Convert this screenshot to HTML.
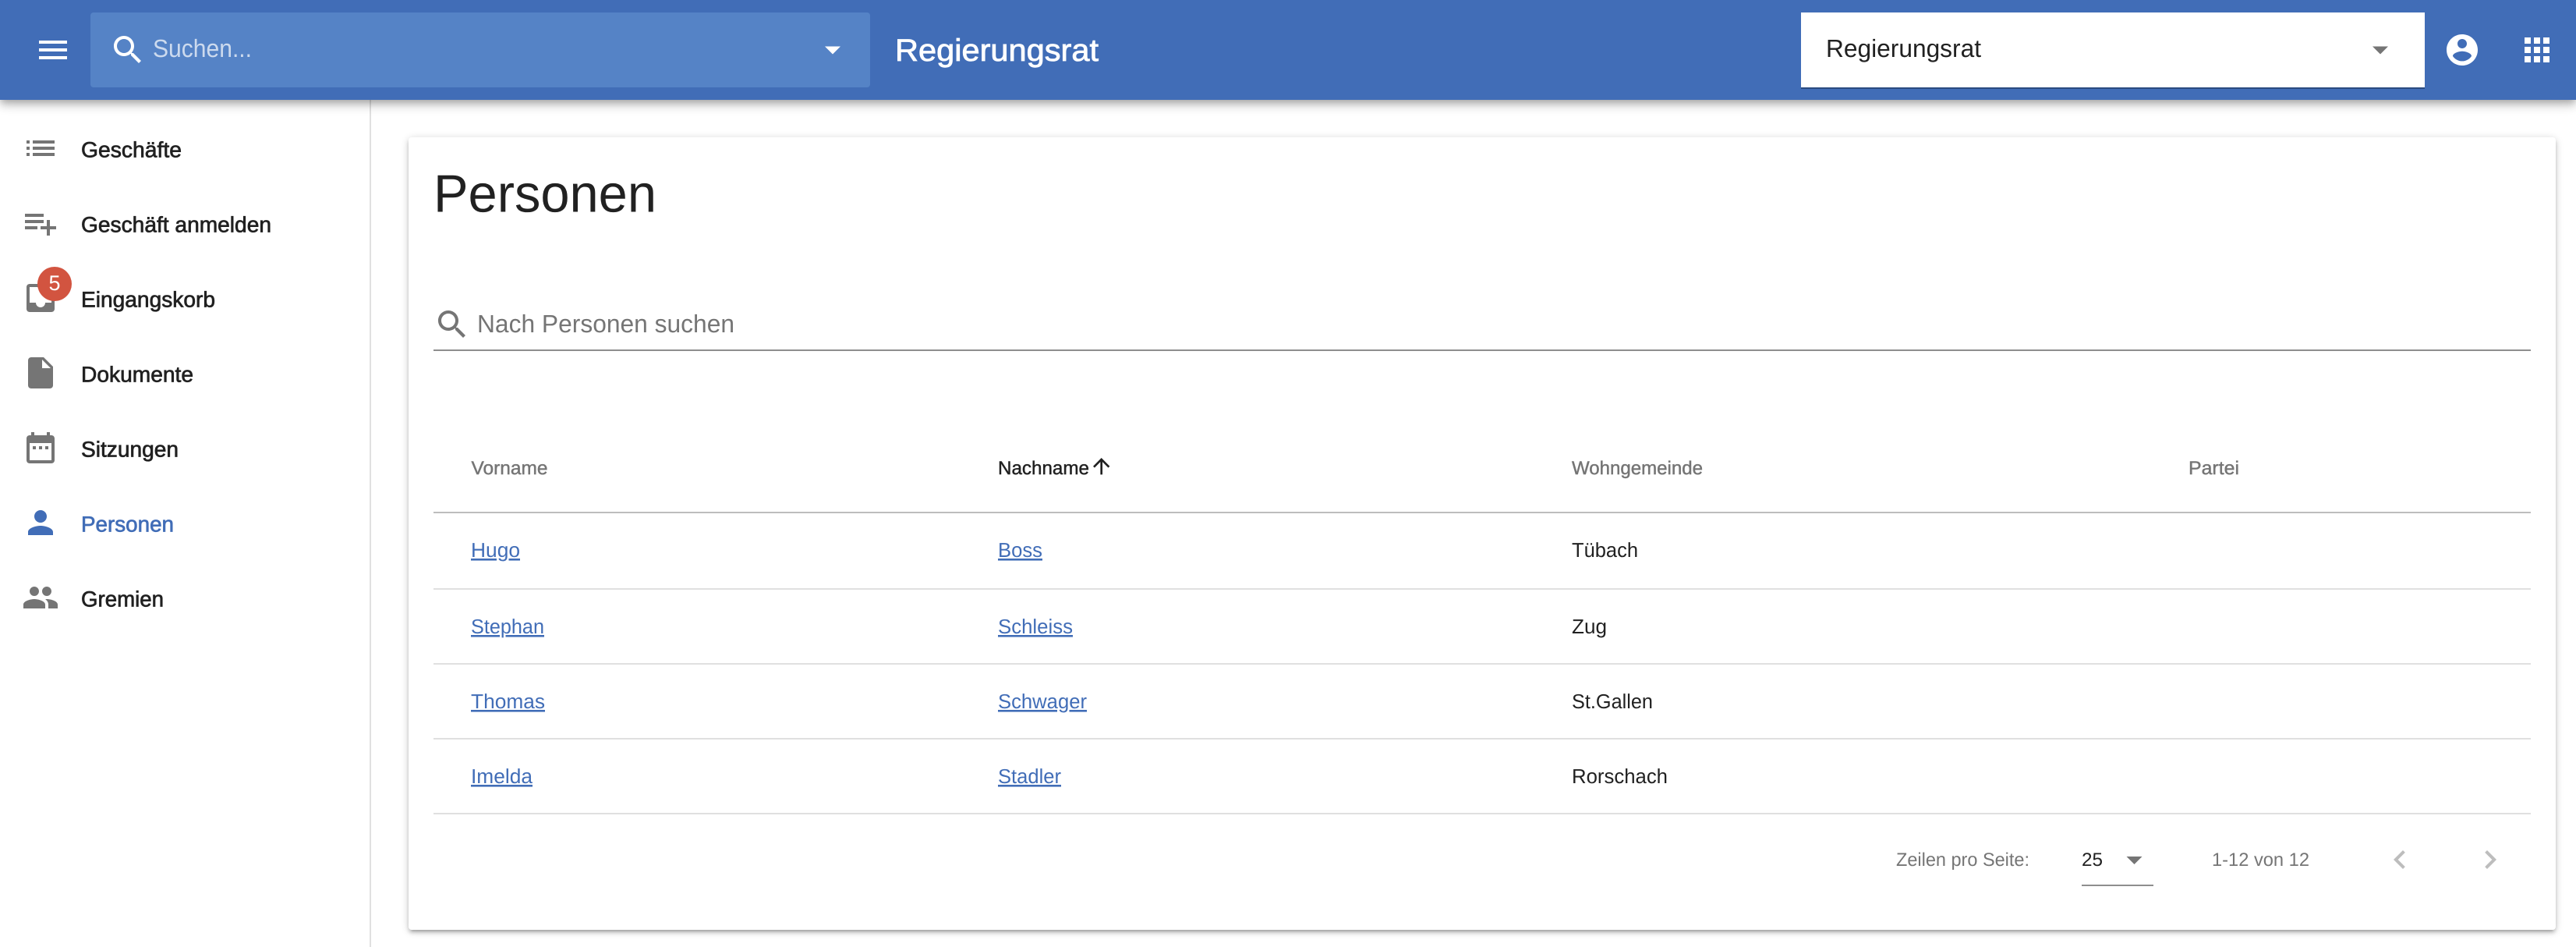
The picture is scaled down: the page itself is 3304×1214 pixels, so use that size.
<!DOCTYPE html>
<html lang="de">
<head>
<meta charset="utf-8">
<title>Personen</title>
<style>
html,body{margin:0;padding:0;width:3304px;height:1214px;overflow:hidden;background:#fff}
body{position:relative;font-family:"Liberation Sans",sans-serif}
.abs{position:absolute}
#side{left:0;top:128px;width:474px;height:1086px;border-right:2px solid #e0e0e0;background:#fff}
#card{left:524px;top:176px;width:2754px;height:1016px;background:#fff;border-radius:4px;box-shadow:0 4px 4px 0 rgba(0,0,0,.14),0 6px 2px -4px rgba(0,0,0,.12),0 2px 10px 0 rgba(0,0,0,.2)}
#head{left:0;top:0;width:3304px;height:128px;background:#416db7;box-shadow:0 4px 8px -2px rgba(0,0,0,.2),0 8px 10px 0 rgba(0,0,0,.14),0 2px 20px 0 rgba(0,0,0,.12)}
#sbox{left:116px;top:16px;width:1000px;height:96px;background:#5583c6;border-radius:4px}
#sel{left:2310px;top:16px;width:800px;height:96px;background:#fff;border-bottom:2px solid #2b4b80}
svg{position:absolute;left:0;top:0;font-family:"Liberation Sans",sans-serif;text-rendering:geometricPrecision}
.n{font-size:28px;fill:#212121;stroke:#212121;stroke-width:.7px}
.th{font-size:24px;fill:#757575;stroke:#757575;stroke-width:.45px}
.td{font-size:26px;fill:#212121}
.a{font-size:26px;fill:#416db7;text-decoration:underline}
.p{font-size:24px;fill:#757575}
.g{fill:#757575}
</style>
</head>
<body>
<div id="side" class="abs"></div>
<div id="card" class="abs"></div>
<div id="head" class="abs"></div>
<div id="sbox" class="abs"></div>
<div id="sel" class="abs"></div>
<svg width="3304" height="1214" viewBox="0 0 3304 1214" xmlns="http://www.w3.org/2000/svg">
  <!-- Header icons -->
  <path fill="#fff" transform="translate(44 40) scale(2)" d="M3 18h18v-2H3v2zm0-5h18v-2H3v2zm0-7v2h18V6H3z"/>
  <path fill="#fff" transform="translate(140 40) scale(2)" d="M15.5 14h-.79l-.28-.27C15.41 12.59 16 11.11 16 9.5 16 5.91 13.09 3 9.5 3S3 5.91 3 9.5 5.91 16 9.5 16c1.61 0 3.09-.59 4.23-1.57l.27.28v.79l5 4.99L20.49 19l-4.99-5zm-6 0C7.01 14 5 11.99 5 9.5S7.01 5 9.5 5 14 7.01 14 9.5 11.99 14 9.5 14z"/>
  <text x="196" y="73" font-size="32" fill="#fff" fill-opacity=".7" textLength="127" lengthAdjust="spacingAndGlyphs">Suchen...</text>
  <path fill="#fff" transform="translate(1044 39.5) scale(2)" d="M7 10l5 5 5-5z"/>
  <text x="1148" y="78" font-size="40" fill="#fff" stroke="#fff" stroke-width=".8" textLength="261" lengthAdjust="spacingAndGlyphs">Regierungsrat</text>
  <text x="2342" y="73" font-size="32" fill="#212121" textLength="199" lengthAdjust="spacingAndGlyphs">Regierungsrat</text>
  <path fill="#757575" transform="translate(3029 39.5) scale(2)" d="M7 10l5 5 5-5z"/>
  <path fill="#fff" transform="translate(3134 40) scale(2)" d="M12 2C6.48 2 2 6.48 2 12s4.48 10 10 10 10-4.48 10-10S17.52 2 12 2zm0 3c1.66 0 3 1.34 3 3s-1.34 3-3 3-3-1.34-3-3 1.34-3 3-3zm0 14.2c-2.5 0-4.71-1.28-6-3.22.03-1.99 4-3.08 6-3.08 1.99 0 5.97 1.09 6 3.08-1.29 1.94-3.5 3.22-6 3.22z"/>
  <path fill="#fff" transform="translate(3230 40) scale(2)" d="M4 8h4V4H4v4zm6 12h4v-4h-4v4zm-6 0h4v-4H4v4zm0-6h4v-4H4v4zm6 0h4v-4h-4v4zm6-10v4h4V4h-4zm-6 4h4V4h-4v4zm6 6h4v-4h-4v4zm0 6h4v-4h-4v4z"/>

  <!-- Sidebar -->
  <path class="g" transform="translate(28 166) scale(2)" d="M3 13h2v-2H3v2zm0 4h2v-2H3v2zm0-8h2V7H3v2zm4 4h14v-2H7v2zm0 4h14v-2H7v2zM7 7v2h14V7H7z"/>
  <text class="n" x="104" y="201.500" textLength="129" lengthAdjust="spacingAndGlyphs">Geschäfte</text>
  <path class="g" transform="translate(28 262) scale(2)" d="M14 10H2v2h12v-2zm0-4H2v2h12V6zm4 8v-4h-2v4h-4v2h4v4h2v-4h4v-2h-4zM2 16h8v-2H2v2z"/>
  <text class="n" x="104" y="297.500" textLength="244" lengthAdjust="spacingAndGlyphs">Geschäft anmelden</text>
  <path class="g" transform="translate(28 358) scale(2)" d="M19 3H4.99c-1.11 0-1.98.89-1.98 2L3 19c0 1.1.88 2 1.99 2H19c1.1 0 2-.9 2-2V5c0-1.11-.9-2-2-2zm0 12h-4c0 1.66-1.35 3-3 3s-3-1.34-3-3H4.99V5H19v10z"/>
  <circle cx="70" cy="364" r="22" fill="#d25440"/>
  <text x="70" y="372" font-size="27" fill="#fff" text-anchor="middle">5</text>
  <text class="n" x="104" y="393.500" textLength="172" lengthAdjust="spacingAndGlyphs">Eingangskorb</text>
  <path class="g" transform="translate(28 454) scale(2)" d="M6 2c-1.1 0-1.99.9-1.99 2L4 20c0 1.1.89 2 1.99 2H18c1.1 0 2-.9 2-2V8l-6-6H6zm7 7V3.5L18.5 9H13z"/>
  <text class="n" x="104" y="489.500" textLength="144" lengthAdjust="spacingAndGlyphs">Dokumente</text>
  <path class="g" transform="translate(28 550) scale(2)" d="M9 11H7v2h2v-2zm4 0h-2v2h2v-2zm4 0h-2v2h2v-2zm2-7h-1V2h-2v2H8V2H6v2H5c-1.11 0-1.99.9-1.99 2L3 20c0 1.1.89 2 2 2h14c1.1 0 2-.9 2-2V6c0-1.1-.9-2-2-2zm0 16H5V9h14v11z"/>
  <text class="n" x="104" y="585.500" textLength="125" lengthAdjust="spacingAndGlyphs">Sitzungen</text>
  <path fill="#416db7" transform="translate(28 646) scale(2)" d="M12 12c2.21 0 4-1.79 4-4s-1.79-4-4-4-4 1.79-4 4 1.79 4 4 4zm0 2c-2.67 0-8 1.34-8 4v2h16v-2c0-2.66-5.33-4-8-4z"/>
  <text class="n" style="fill:#416db7;stroke:#416db7" x="104" y="681.500" textLength="119" lengthAdjust="spacingAndGlyphs">Personen</text>
  <path class="g" transform="translate(28 742) scale(2)" d="M16 11c1.66 0 2.99-1.34 2.99-3S17.66 5 16 5c-1.66 0-3 1.34-3 3s1.34 3 3 3zm-8 0c1.66 0 2.99-1.34 2.99-3S9.66 5 8 5C6.34 5 5 6.34 5 8s1.34 3 3 3zm0 2c-2.33 0-7 1.17-7 3.5V19h14v-2.5c0-2.33-4.67-3.5-7-3.5zm8 0c-.29 0-.62.02-.97.05 1.16.84 1.97 1.97 1.97 3.45V19h6v-2.5c0-2.33-4.67-3.5-7-3.5z"/>
  <text class="n" x="104" y="777.500" textLength="106" lengthAdjust="spacingAndGlyphs">Gremien</text>

  <!-- Card -->
  <text x="556" y="271.500" font-size="68" fill="#212121" textLength="286" lengthAdjust="spacingAndGlyphs">Personen</text>
  <path class="g" transform="translate(556 392) scale(2)" d="M15.5 14h-.79l-.28-.27C15.41 12.59 16 11.11 16 9.5 16 5.91 13.09 3 9.5 3S3 5.91 3 9.5 5.91 16 9.5 16c1.61 0 3.09-.59 4.23-1.57l.27.28v.79l5 4.99L20.49 19l-4.99-5zm-6 0C7.01 14 5 11.99 5 9.5S7.01 5 9.5 5 14 7.01 14 9.5 11.99 14 9.5 14z"/>
  <text x="612" y="426" font-size="32" fill="#757575" textLength="330" lengthAdjust="spacingAndGlyphs">Nach Personen suchen</text>
  <rect x="556" y="448" width="2690" height="2" fill="#8e8e8e"/>

  <!-- Table head -->
  <text class="th" x="604.500" y="608" textLength="98" lengthAdjust="spacingAndGlyphs">Vorname</text>
  <text class="th" style="fill:#212121;stroke:#212121" x="1280" y="608" textLength="117" lengthAdjust="spacingAndGlyphs">Nachname</text>
  <path fill="#212121" transform="translate(1396.700 581.700) scale(1.333)" d="M4 12l1.41 1.41L11 7.83V20h2V7.83l5.58 5.59L20 12l-8-8-8 8z"/>
  <text class="th" x="2016" y="608" textLength="168" lengthAdjust="spacingAndGlyphs">Wohngemeinde</text>
  <text class="th" x="2807" y="608" textLength="65" lengthAdjust="spacingAndGlyphs">Partei</text>
  <rect x="556" y="656" width="2690" height="2" fill="#bdbdbd"/>

  <!-- Rows -->
  <text class="a" x="604" y="714" textLength="63" lengthAdjust="spacingAndGlyphs">Hugo</text>
  <text class="a" x="1280" y="714" textLength="57" lengthAdjust="spacingAndGlyphs">Boss</text>
  <text class="td" x="2016" y="714" textLength="85" lengthAdjust="spacingAndGlyphs">Tübach</text>
  <rect x="556" y="754" width="2690" height="2" fill="#e0e0e0"/>
  <text class="a" x="604" y="812" textLength="94" lengthAdjust="spacingAndGlyphs">Stephan</text>
  <text class="a" x="1280" y="812" textLength="96" lengthAdjust="spacingAndGlyphs">Schleiss</text>
  <text class="td" x="2016" y="812" textLength="45" lengthAdjust="spacingAndGlyphs">Zug</text>
  <rect x="556" y="850" width="2690" height="2" fill="#e0e0e0"/>
  <text class="a" x="604" y="908" textLength="95" lengthAdjust="spacingAndGlyphs">Thomas</text>
  <text class="a" x="1280" y="908" textLength="114" lengthAdjust="spacingAndGlyphs">Schwager</text>
  <text class="td" x="2016" y="908" textLength="104" lengthAdjust="spacingAndGlyphs">St.Gallen</text>
  <rect x="556" y="946" width="2690" height="2" fill="#e0e0e0"/>
  <text class="a" x="604" y="1004" textLength="79" lengthAdjust="spacingAndGlyphs">Imelda</text>
  <text class="a" x="1280" y="1004" textLength="81" lengthAdjust="spacingAndGlyphs">Stadler</text>
  <text class="td" x="2016" y="1004" textLength="123" lengthAdjust="spacingAndGlyphs">Rorschach</text>
  <rect x="556" y="1042" width="2690" height="2" fill="#e0e0e0"/>

  <!-- Pagination -->
  <text class="p" x="2432" y="1110" textLength="171" lengthAdjust="spacingAndGlyphs">Zeilen pro Seite:</text>
  <text x="2670" y="1110" font-size="24" fill="#212121" textLength="27" lengthAdjust="spacingAndGlyphs">25</text>
  <path fill="#757575" transform="translate(2713.500 1078) scale(2)" d="M7 10l5 5 5-5z"/>
  <rect x="2670" y="1134" width="92" height="2" fill="#8e8e8e"/>
  <text class="p" x="2837" y="1110" textLength="125" lengthAdjust="spacingAndGlyphs">1-12 von 12</text>
  <path fill="#bdbdbd" transform="translate(3054 1078) scale(2)" d="M15.41 7.41L14 6l-6 6 6 6 1.41-1.41L10.83 12z"/>
  <path fill="#bdbdbd" transform="translate(3170 1078) scale(2)" d="M10 6L8.59 7.41 13.17 12l-4.58 4.59L10 18l6-6z"/>
</svg>
</body>
</html>
